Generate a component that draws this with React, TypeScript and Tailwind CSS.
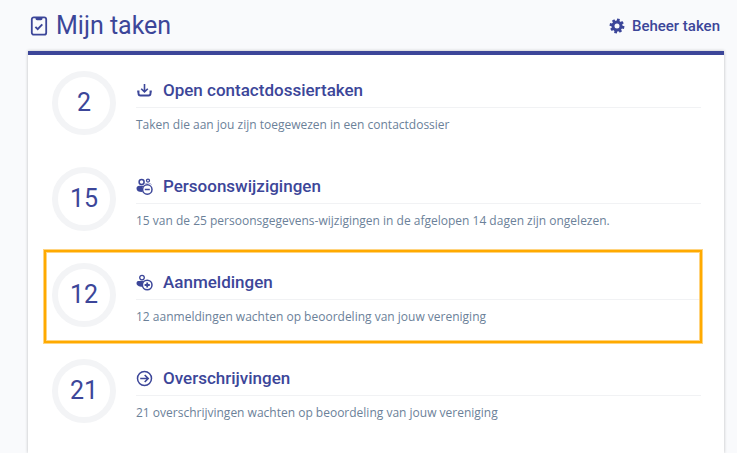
import { FC, ReactNode } from "react";

interface IconProps {
  readonly className?: string;
}

const ClipboardIcon: FC<IconProps> = ({ className }) => (
  <svg viewBox="0 0 18 20" fill="none" stroke="currentColor" className={className} aria-hidden="true">
    <rect x="1.8" y="1.3" width="14.4" height="17.4" rx="2" strokeWidth="1.8" />
    <path d="M5.5 1h7v1.6a1.6 1.6 0 0 1-1.6 1.6H7.1a1.6 1.6 0 0 1-1.6-1.6z" fill="currentColor" stroke="none" />
    <path d="M5.4 10.8l2.3 2.3 4.6-4.7" strokeWidth="1.9" />
  </svg>
);

const GearIcon: FC<IconProps> = ({ className }) => (
  <svg viewBox="0 0 16 16" fill="none" stroke="currentColor" className={className} aria-hidden="true">
    <circle cx="8" cy="8" r="4" strokeWidth="3" />
    <g strokeWidth="2.8" transform="rotate(12 8 8)">
      <path d="M8 .6v3M8 12.4v3M.6 8h3M12.4 8h3" />
      <path d="M2.9 2.9l1.9 1.9M11.2 11.2l1.9 1.9M2.9 13.1l1.9-1.9M11.2 4.8l1.9-1.9" />
    </g>
  </svg>
);

const InboxIcon: FC<IconProps> = ({ className }) => (
  <svg viewBox="0 0 17 17" fill="none" stroke="currentColor" className={className} aria-hidden="true">
    <path d="M8.5 2v7.5M5.2 6.7l3.3 3.2 3.300-3.200" strokeWidth="1.6" />
    <path d="M1.2 9.5h1.3v2a2 2 0 0 0 2 2h8a2 2 0 0 0 2-2v-2h1.300" strokeWidth="1.9" />
  </svg>
);

const PeopleMinusIcon: FC<IconProps> = ({ className }) => (
  <svg viewBox="0 0 17 17" fill="none" stroke="currentColor" className={className} aria-hidden="true">
    <circle cx="5.6" cy="4" r="2.5" strokeWidth="1.5" />
    <circle cx="12" cy="2.6" r="1.5" strokeWidth="1.3" />
    <path d="M.5 10.5c0-1.8 1.2-2.8 2.8-2.8h4.4c-1.8 1.7-2.3 4.2-1.2 6.4C2.6 14.2.5 12.9.5 10.5z" fill="currentColor" stroke="none" />
    <path d="M8.8 6.3c.5-.7 1.2-1 2-1h2.4c1.3 0 2.2.7 2.5 1.7-1.9-1.6-4.9-1.8-6.9-.7z" fill="currentColor" stroke="none" />
    <circle cx="11.3" cy="11.5" r="4.7" strokeWidth="1.5" />
    <path d="M8.8 11.5h5" strokeWidth="1.5" />
  </svg>
);

const PersonPlusIcon: FC<IconProps> = ({ className }) => (
  <svg viewBox="0 0 17 17" fill="none" stroke="currentColor" className={className} aria-hidden="true">
    <circle cx="6" cy="3.6" r="2.3" strokeWidth="1.3" />
    <path d="M.5 9.2c0-1.6 1-2.2 2.4-2.2h5C6.3 8.600 5.700 10.700 6.300 12.700 2.900 12.500.5 11.500.5 9.200z" fill="currentColor" stroke="none" />
    <circle cx="11.2" cy="11" r="4.8" strokeWidth="1.5" />
    <path d="M8.6 11h5.2M11.2 8.4v5.2" strokeWidth="1.8" />
  </svg>
);

const ArrowCircleIcon: FC<IconProps> = ({ className }) => (
  <svg viewBox="0 0 17 17" fill="none" stroke="currentColor" className={className} aria-hidden="true">
    <circle cx="8.5" cy="8.5" r="7" strokeWidth="1.5" />
    <path d="M4.2 8.5h7.6M8.7 5l3.5 3.5L8.7 12" strokeWidth="1.6" />
  </svg>
);

interface Task {
  readonly count: number;
  readonly title: string;
  readonly description: string;
  readonly icon: ReactNode;
  readonly highlighted?: boolean;
}

const TASKS: Task[] = [
  {
    count: 2,
    title: "Open contactdossiertaken",
    description: "Taken die aan jou zijn toegewezen in een contactdossier",
    icon: <InboxIcon className="size-4.25" />,
  },
  {
    count: 15,
    title: "Persoonswijzigingen",
    description: "15 van de 25 persoonsgegevens-wijzigingen in de afgelopen 14 dagen zijn ongelezen.",
    icon: <PeopleMinusIcon className="size-4.25" />,
  },
  {
    count: 12,
    title: "Aanmeldingen",
    description: "12 aanmeldingen wachten op beoordeling van jouw vereniging",
    icon: <PersonPlusIcon className="size-4.25" />,
    highlighted: true,
  },
  {
    count: 21,
    title: "Overschrijvingen",
    description: "21 overschrijvingen wachten op beoordeling van jouw vereniging",
    icon: <ArrowCircleIcon className="size-4.25" />,
  },
];

const TaskRow: FC<{ readonly task: Task }> = ({ task }) => {
  const { count, title, description, icon, highlighted } = task;

  return (
    <li className="relative flex gap-5">
      <div className="flex size-16 shrink-0 items-center justify-center rounded-full border-6 border-[#f3f4f6] text-[25px] text-[#3c4699]">
        {count}
      </div>
      <div className="min-w-0 grow pt-1.75">
        <h2 className="border-b border-[#f1f2f4] pb-1.25 text-[17px] leading-6 font-medium text-[#3c4699]">
          <a href="#" className="flex items-center gap-2.5">
            {icon}
            {title}
          </a>
        </h2>
        <p className="pt-1.75 font-['Open_Sans',sans-serif] text-xs leading-5 text-[#6b8199]">{description}</p>
      </div>
      {highlighted && (
        <div className="pointer-events-none absolute -top-3.5 -right-0.5 -bottom-4.25 -left-2.25 border border-[#ffd480] shadow-[inset_0_0_0_2px_#ffaa00,inset_0_0_0_3px_#ffd480]" />
      )}
    </li>
  );
};

export default function App() {
  return (
    <main className="flex min-h-screen flex-col bg-[#f9fafc] pr-3.25 pl-7 font-[Roboto,sans-serif]">
      <header className="flex items-center justify-between pt-2 pr-1 pb-1.75 text-[#3c4699]">
        <h1 className="flex items-center gap-2 pl-0.5 text-[25px] leading-9">
          <ClipboardIcon className="h-5 w-4.5" />
          Mijn taken
        </h1>
        <a href="#" className="flex items-center gap-1.75 text-[15px] leading-6 font-medium">
          <GearIcon className="size-4" />
          Beheer taken
        </a>
      </header>
      <section className="grow border-t-4 border-[#3c4699] bg-white py-4 pr-5.75 pl-6 shadow-[0_0_3px_rgba(0,0,0,0.25)]">
        <ul className="flex flex-col gap-8">
          {TASKS.map((task) => (
            <TaskRow key={task.title} task={task} />
          ))}
        </ul>
      </section>
    </main>
  );
}
